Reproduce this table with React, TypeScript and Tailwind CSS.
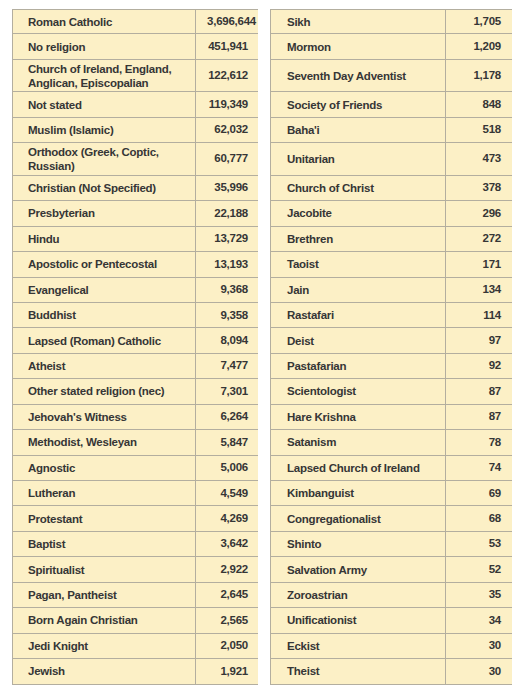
const rows: [string, string, string, string][] = [
  ["Roman Catholic", "3,696,644", "Sikh", "1,705"],
  ["No religion", "451,941", "Mormon", "1,209"],
  ["Church of Ireland, England, Anglican, Episcopalian", "122,612", "Seventh Day Adventist", "1,178"],
  ["Not stated", "119,349", "Society of Friends", "848"],
  ["Muslim (Islamic)", "62,032", "Baha'i", "518"],
  ["Orthodox (Greek, Coptic, Russian)", "60,777", "Unitarian", "473"],
  ["Christian (Not Specified)", "35,996", "Church of Christ", "378"],
  ["Presbyterian", "22,188", "Jacobite", "296"],
  ["Hindu", "13,729", "Brethren", "272"],
  ["Apostolic or Pentecostal", "13,193", "Taoist", "171"],
  ["Evangelical", "9,368", "Jain", "134"],
  ["Buddhist", "9,358", "Rastafari", "114"],
  ["Lapsed (Roman) Catholic", "8,094", "Deist", "97"],
  ["Atheist", "7,477", "Pastafarian", "92"],
  ["Other stated religion (nec)", "7,301", "Scientologist", "87"],
  ["Jehovah's Witness", "6,264", "Hare Krishna", "87"],
  ["Methodist, Wesleyan", "5,847", "Satanism", "78"],
  ["Agnostic", "5,006", "Lapsed Church of Ireland", "74"],
  ["Lutheran", "4,549", "Kimbanguist", "69"],
  ["Protestant", "4,269", "Congregationalist", "68"],
  ["Baptist", "3,642", "Shinto", "53"],
  ["Spiritualist", "2,922", "Salvation Army", "52"],
  ["Pagan, Pantheist", "2,645", "Zoroastrian", "35"],
  ["Born Again Christian", "2,565", "Unificationist", "34"],
  ["Jedi Knight", "2,050", "Eckist", "30"],
  ["Jewish", "1,921", "Theist", "30"],
]

export default function App() {
  return (
    <div className="w-[519px] h-[693px] bg-white pt-[9px] pl-[12px] font-['Liberation_Sans',Arial,sans-serif] text-[11.5px] tracking-[-0.25px] font-bold text-[#363636]">
      <div className="grid grid-cols-[183px_63px_12px_175px_67px]">
        {rows.map(([a, an, b, bn], i) => {
          const tall = i === 2 || i === 5
          const h = tall ? "h-[32.5px]" : "h-[25.44px]"
          const top = i === 0 ? "border-t" : ""
          return [
            <div key={i + "a"} className={`${h} ${top} flex items-center border-b border-l border-[#b3ae9f] bg-[#fcf0c6] pl-[15px] pr-2 leading-[14px]`}>
              {a}
            </div>,
            <div key={i + "an"} className={`${h} ${top} flex items-center justify-end border-b border-l border-[#b3ae9f] bg-[#fcf0c6] whitespace-nowrap ${i === 0 ? "pr-[2px]" : "pr-[10px]"}`}>
              {an}
            </div>,
            <div key={i + "g"} className={h} />,
            <div key={i + "b"} className={`${h} ${top} flex items-center border-b border-l border-[#b3ae9f] bg-[#fcf0c6] pl-[16px] pr-2 leading-[14px]`}>
              {b}
            </div>,
            <div key={i + "bn"} className={`${h} ${top} flex items-center justify-end border-b border-l border-[#b3ae9f] bg-[#fcf0c6] pr-[11px]`}>
              {bn}
            </div>,
          ]
        })}
      </div>
    </div>
  )
}
